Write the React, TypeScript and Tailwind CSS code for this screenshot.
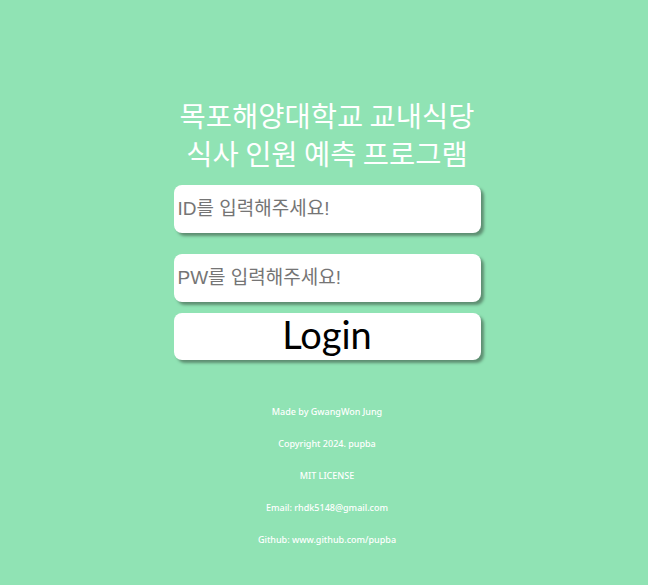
export default function App() {
  const footer = [
    "Made by GwangWon Jung",
    "Copyright 2024. pupba",
    "MIT LICENSE",
    "Email: rhdk5148@gmail.com",
    "Github: www.github.com/pupba",
  ];

  return (
    <div className="min-h-[585px] w-full bg-[#90e3b4] flex flex-col items-center pl-[6px] pt-[96px] font-['Noto_Sans_CJK_KR',sans-serif]">
      <h1 className="text-white text-[28.5px] leading-[38px] text-center font-normal">
        목포해양대학교 교내식당
        <br />
        식사 인원 예측 프로그램
      </h1>

      <input
        type="text"
        placeholder="ID를 입력해주세요!"
        className="mt-[13px] w-[307px] h-[48px] bg-white rounded-lg shadow-[3px_3px_3px_#5e8f72] px-1 text-[19px] text-black placeholder:text-[#757575] outline-none font-['Liberation_Sans','Noto_Sans_CJK_KR',sans-serif]"
      />
      <input
        type="password"
        placeholder="PW를 입력해주세요!"
        className="mt-[21px] w-[307px] h-[48px] bg-white rounded-lg shadow-[3px_3px_3px_#5e8f72] px-1 text-[19px] text-black placeholder:text-[#757575] outline-none font-['Liberation_Sans','Noto_Sans_CJK_KR',sans-serif]"
      />
      <button className="mt-[11px] w-[307px] h-[47px] pb-[5px] bg-white rounded-lg shadow-[3px_3px_3px_#5e8f72] text-black text-[38px] leading-none font-['Lato',sans-serif]">
        Login
      </button>

      <footer className="mt-[36px] flex flex-col items-center text-white text-[9px] font-medium font-['Noto_Sans',sans-serif]">
        {footer.map((line) => (
          <p key={line} className="leading-[32px]">
            {line}
          </p>
        ))}
      </footer>
    </div>
  );
}
